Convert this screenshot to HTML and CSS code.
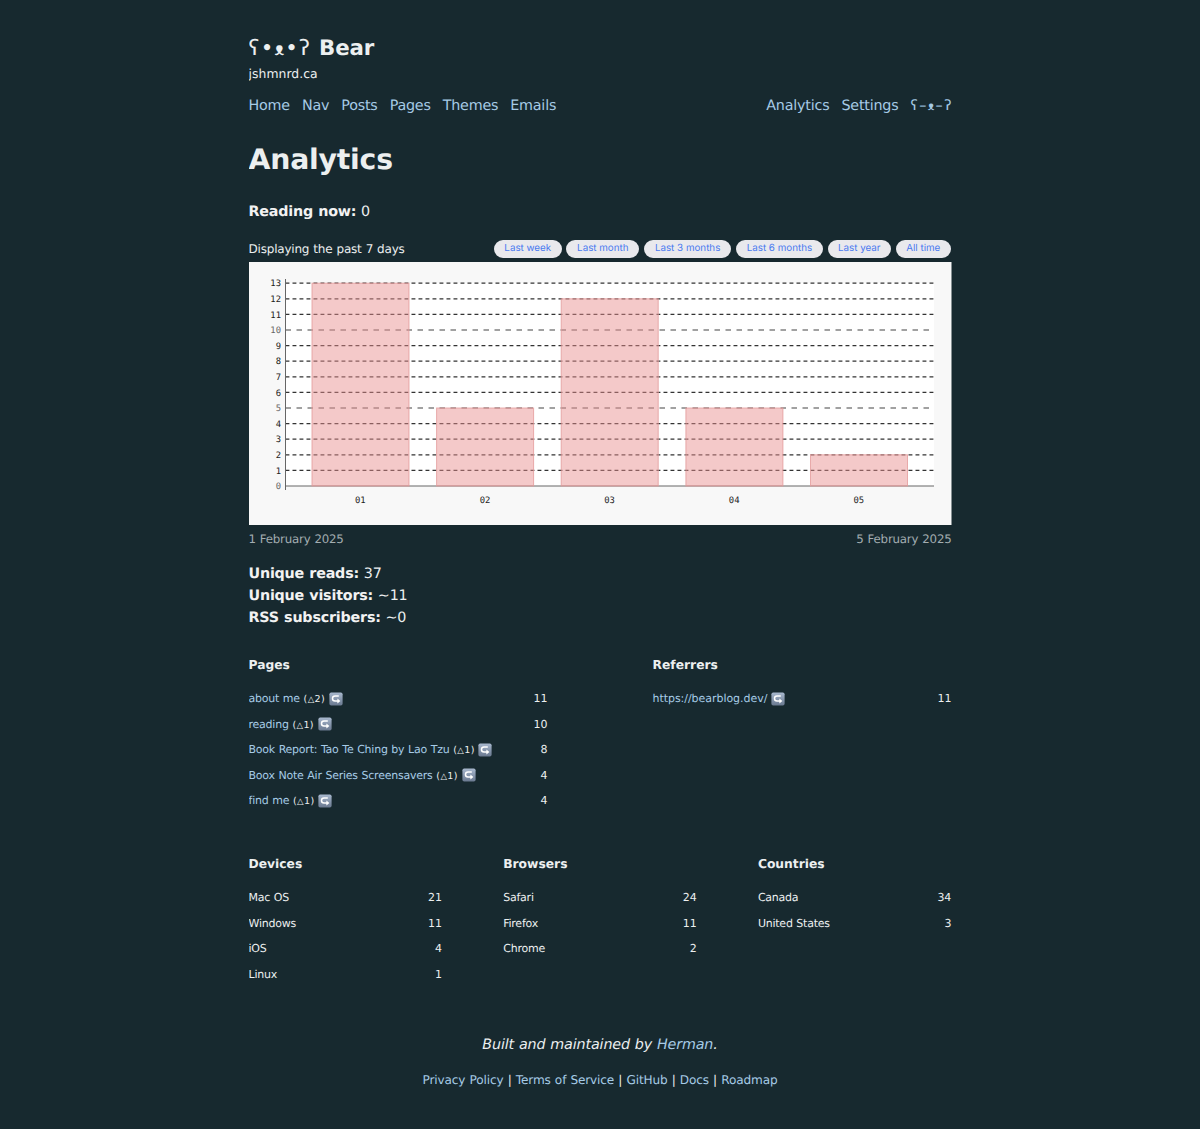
FILE: index.html
```html
<!DOCTYPE html>
<html lang="en">
<head>
<meta charset="utf-8">
<title>Analytics | Bear</title>
<link rel="stylesheet" href="styles.css">
</head>
<body>
<svg class="defs" width="0" height="0" aria-hidden="true">
  <defs>
    <linearGradient id="key" x1="0" y1="0" x2="0" y2="1"><stop offset="0" stop-color="#a9b9cf"/><stop offset="1" stop-color="#69788f"/></linearGradient>
    <symbol id="ret" viewBox="0 0 14 14"><rect x=".4" y=".4" width="13.2" height="13.2" rx="1.8" fill="url(#key)"/><path d="M9.8 3.9H6a2.5 2.5 0 0 0 0 5h3.4" fill="none" stroke="#fff" stroke-width="1.5"/><path d="M8.4 6.4 11.4 8.9 8.4 11.4z" fill="#fff"/></symbol>
  </defs>
</svg>
<header>
  <div class="brand"><span class="face">ʕ•<span class="nose">ᴥ</span>•ʔ</span> Bear</div>
  <div class="domain">jshmnrd.ca</div>
  <nav>
    <div class="links"><a>Home</a><a>Nav</a><a>Posts</a><a>Pages</a><a>Themes</a><a>Emails</a></div>
    <div class="links"><a>Analytics</a><a>Settings</a><a class="sleep">ʕ–<span class="nose">ᴥ</span>–ʔ</a></div>
  </nav>
</header>
<main>
  <h1>Analytics</h1>
  <p class="now"><b>Reading now:</b> 0</p>
  <div class="range">
    <span>Displaying the past 7 days</span>
    <div class="pills"><a class="w1">Last week</a><a class="w2">Last month</a><a class="w3">Last 3 months</a><a class="w3">Last 6 months</a><a class="w4">Last year</a><a class="w5">All time</a></div>
  </div>
  <svg class="chart" viewBox="249 262 703 263" width="703" height="263">
    <rect x="248.5" y="262" width="703" height="263" fill="#f8f8f8"/>
    <rect x="285.5" y="283" width="648.5" height="203" fill="#fff"/>
    <g class="minor">
      <path d="M285.5 283.2H934M285.5 298.8H934M285.5 314.4H934M285.5 345.6H934M285.5 361.2H934M285.5 376.8H934M285.5 392.4H934M285.5 423.6H934M285.5 439.2H934M285.5 454.8H934M285.5 470.4H934"/>
    </g>
    <path class="major" d="M285.5 330H934M285.5 408H934"/>
    <path class="axis" d="M285.5 279V490M285.5 486H934"/>
    <g class="bars">
      <rect x="312" y="283.2" width="97" height="202.8"/><rect x="436.6" y="408" width="97" height="78"/><rect x="561.2" y="298.8" width="97" height="187.2"/><rect x="685.9" y="408" width="97" height="78"/><rect x="810.5" y="454.8" width="97" height="31.2"/>
    </g>
    <g class="ylab">
      <text x="281" y="286.4">13</text><text x="281" y="302">12</text><text x="281" y="317.6">11</text><text x="281" y="333.2" class="dim">10</text><text x="281" y="348.8">9</text><text x="281" y="364.4">8</text><text x="281" y="380">7</text><text x="281" y="395.6">6</text><text x="281" y="411.2" class="dim">5</text><text x="281" y="426.8">4</text><text x="281" y="442.4">3</text><text x="281" y="458">2</text><text x="281" y="473.6">1</text><text x="281" y="489.2" class="dim">0</text>
    </g>
    <g class="xlab">
      <text x="360.3" y="503">01</text><text x="485" y="503">02</text><text x="609.6" y="503">03</text><text x="734.2" y="503">04</text><text x="858.8" y="503">05</text>
    </g>
  </svg>
  <div class="dates"><span>1 February 2025</span><span>5 February 2025</span></div>
  <div class="stats">
    <div><b>Unique reads:</b> 37</div>
    <div><b>Unique visitors:</b> ~11</div>
    <div><b>RSS subscribers:</b> ~0</div>
  </div>
  <div class="two">
    <section>
      <h2>Pages</h2>
      <div class="row"><span><a>about me</a> <small>(<i>△</i>2)</small> <svg class="ret"><use href="#ret"/></svg></span><span>11</span></div>
      <div class="row"><span><a>reading</a> <small>(<i>△</i>1)</small> <svg class="ret"><use href="#ret"/></svg></span><span>10</span></div>
      <div class="row"><span><a>Book Report: Tao Te Ching by Lao Tzu</a> <small>(<i>△</i>1)</small> <svg class="ret"><use href="#ret"/></svg></span><span>8</span></div>
      <div class="row"><span><a>Boox Note Air Series Screensavers</a> <small>(<i>△</i>1)</small> <svg class="ret"><use href="#ret"/></svg></span><span>4</span></div>
      <div class="row"><span><a>find me</a> <small>(<i>△</i>1)</small> <svg class="ret"><use href="#ret"/></svg></span><span>4</span></div>
    </section>
    <section>
      <h2>Referrers</h2>
      <div class="row"><span><a class="url">https://bearblog.dev/</a> <svg class="ret"><use href="#ret"/></svg></span><span>11</span></div>
    </section>
  </div>
  <div class="three">
    <section>
      <h2>Devices</h2>
      <div class="row"><span>Mac OS</span><span>21</span></div>
      <div class="row"><span>Windows</span><span>11</span></div>
      <div class="row"><span>iOS</span><span>4</span></div>
      <div class="row"><span>Linux</span><span>1</span></div>
    </section>
    <section>
      <h2>Browsers</h2>
      <div class="row"><span>Safari</span><span>24</span></div>
      <div class="row"><span>Firefox</span><span>11</span></div>
      <div class="row"><span>Chrome</span><span>2</span></div>
    </section>
    <section>
      <h2>Countries</h2>
      <div class="row"><span>Canada</span><span>34</span></div>
      <div class="row"><span>United States</span><span>3</span></div>
    </section>
  </div>
</main>
<footer>
  <p class="built">Built and maintained by <a>Herman</a>.</p>
  <p class="legal"><a>Privacy Policy</a> | <a>Terms of Service</a> | <a>GitHub</a> | <a>Docs</a> | <a>Roadmap</a></p>
</footer>
</body>
</html>
```
FILE: styles.css
```css
* { box-sizing: border-box; }
body {
  margin: 0 auto;
  width: 703px;
  height: 1129px;
  padding-top: 35px;
  overflow: hidden;
  font-family: Verdana, "DejaVu Sans", sans-serif;
  font-size: 14.3px;
  line-height: 22px;
  letter-spacing: -.2px;
  word-spacing: .03em;
  text-rendering: geometricPrecision;
  color: #eceff0;
}
html { background: #17292f; }
a { color: #a6cbe6; }
b { color: #f2f2f2; }
p, h1, h2 { margin: 0; }
.defs { position: absolute; }
.brand { font-size: 21.3px; font-weight: bold; line-height: 28px; white-space: nowrap; letter-spacing: -.1px; }
.face { font-weight: normal; letter-spacing: 1.35px; }
.nose { font-family: "Noto Sans", "DejaVu Sans", sans-serif; font-size: .85em; line-height: 1; }
.domain { font-size: 12.4px; line-height: 20px; margin-top: 1px; letter-spacing: .05px; }
nav { display: flex; justify-content: space-between; margin-top: 11px; }
.links { display: flex; gap: 12px; }
.sleep { letter-spacing: 1.5px; margin-right: -1.5px; }
h1 { font-size: 28.3px; line-height: 36px; margin-top: 25px; }
.now { margin-top: 23px; }
.range { display: flex; justify-content: space-between; align-items: center; height: 20px; margin-top: 16px; font-size: 12px; }
.pills { display: flex; gap: 4.8px; margin-right: .5px; font-family: Inter, sans-serif; font-size: 9.8px; word-spacing: 0; }
.pills a { height: 18px; line-height: 18px; border-radius: 9px; background: #e9e9ed; color: #4a7af0; text-align: center; letter-spacing: 0; }
.w1 { width: 67.5px; }
.w2 { width: 73px; }
.w3 { width: 87px; }
.w4 { width: 63px; }
.w5 { width: 55.5px; }
.chart { display: block; margin-top: 3px; font-family: "DejaVu Sans Mono", monospace; font-size: 8.9px; letter-spacing: 0; }
.minor { fill: none; stroke: #333; stroke-width: 1.2; stroke-dasharray: 3.9 3.1; }
.major { fill: none; stroke: #444; stroke-width: 1.2; stroke-dasharray: 5.5 5.5; }
.axis { fill: none; stroke: #666; stroke-width: 1; }
.bars rect { fill: #e88e8e; fill-opacity: .48; stroke: #e49b9b; stroke-opacity: .8; }
.ylab { text-anchor: end; fill: #222; }
.xlab { text-anchor: middle; fill: #222; }
.dim { fill: #666; }
.dates { display: flex; justify-content: space-between; margin-top: 3px; font-size: 11.8px; color: #a3adb1; }
.stats { margin-top: 13px; }
.two, .three { display: grid; }
.two { grid-template-columns: 299px 299px; column-gap: 105px; height: 164px; margin-top: 25px; }
.three { grid-template-columns: repeat(3, 193.5px); column-gap: 61.2px; height: 150px; margin-top: 35px; }
h2 { font-size: 12.3px; line-height: 22px; margin-bottom: 10px; letter-spacing: 0; }
.row { display: flex; justify-content: space-between; height: 25.5px; line-height: 25.5px; font-size: 11px; white-space: nowrap; letter-spacing: -.23px; }
.row > span:last-child { letter-spacing: 0; }
small { font-size: 9.5px; letter-spacing: .4px; }
small i { font-style: normal; font-size: 8.5px; }
.url { letter-spacing: -.04px; }
.ret { width: 14px; height: 14px; vertical-align: -3.5px; }
footer { text-align: center; margin-top: 31px; }
.built { font-style: italic; letter-spacing: -.13px; }
.legal { font-size: 12.1px; margin-top: 13px; letter-spacing: -.13px; }
```
